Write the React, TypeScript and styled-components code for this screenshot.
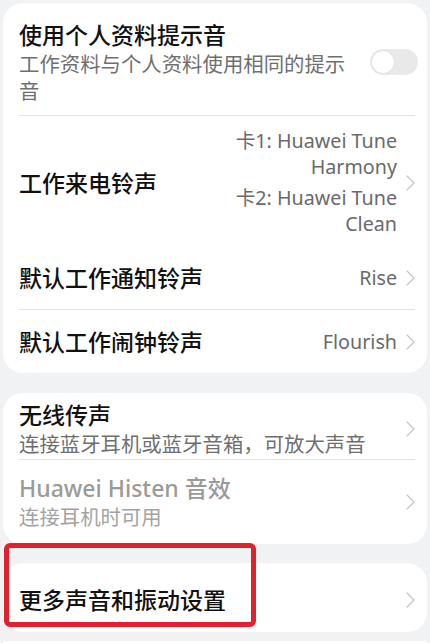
import React from 'react';
import styled, { createGlobalStyle } from 'styled-components';

const GlobalStyle = createGlobalStyle`
  html, body {
    margin: 0;
    padding: 0;
    background: #f1f2f4;
    overflow: hidden;
  }
  body {
    font-family: "Noto Sans", "Noto Sans CJK SC", sans-serif;
    -webkit-font-smoothing: antialiased;
  }
`;

const Page = styled.div`
  display: flex;
  flex-direction: column;
  padding: 3px 3px 0 3px;
  height: 643px;
  box-sizing: border-box;
  overflow: hidden;
`;

const Card = styled.div<{ $gap?: number }>`
  position: relative;
  flex-shrink: 0;
  background: #ffffff;
  border-radius: 20px;
  padding: 0 12px 0 16px;
  margin-bottom: ${p => p.$gap ?? 18}px;
`;

// the next card, only its top edge shows at the bottom of the screen
const PeekCard = styled.div`
  flex: 1;
  min-height: 0;
  background: #ffffff;
  border-radius: 20px 20px 0 0;
`;

const Row = styled.div<{ $pt?: number; $pb?: number; $min?: number; $divider?: boolean }>`
  display: flex;
  align-items: center;
  gap: 8px;
  min-height: ${p => p.$min ?? 0}px;
  padding: ${p => p.$pt ?? 0}px 0 ${p => p.$pb ?? 0}px 0;
  border-bottom: ${p => (p.$divider ? '1px solid #e3e3e3' : 'none')};
  box-sizing: border-box;
`;

const TextBlock = styled.div`
  flex: 1;
  min-width: 0;
`;

const Title = styled.div<{ $disabled?: boolean }>`
  font-size: 23px;
  line-height: 30px;
  font-weight: 500;
  color: ${p => (p.$disabled ? '#9a9a9a' : '#111111')};
`;

const Subtitle = styled.div<{ $disabled?: boolean }>`
  font-size: 20.4px;
  line-height: 27px;
  color: ${p => (p.$disabled ? '#a3a3a3' : '#6f6f6f')};
  margin-top: 1px;
`;

const Values = styled.div`
  display: flex;
  flex-direction: column;
  gap: 5px;
  align-items: flex-end;
`;

const Value = styled.div`
  font-size: 19.7px;
  line-height: 26px;
  color: #6a6a6a;
  text-align: right;
  max-width: 175px;
`;

const Toggle = styled.div`
  width: 48px;
  height: 26px;
  border-radius: 13px;
  background: #e9e9e9;
  position: relative;
  flex-shrink: 0;
  margin-left: 4px;
  margin-right: -3px;
  margin-bottom: 2px;

  &::after {
    content: '';
    position: absolute;
    left: 2px;
    top: 2px;
    width: 22px;
    height: 22px;
    border-radius: 50%;
    background: #ffffff;
    box-shadow: 0 0 1px rgba(0, 0, 0, 0.15);
  }
`;

const ChevronWrap = styled.div`
  width: 10px;
  display: flex;
  justify-content: center;
  flex-shrink: 0;
`;

const Highlight = styled.div`
  position: absolute;
  left: 1px;
  top: -20px;
  width: 252px;
  height: 84px;
  border: 5px solid #e1222c;
  border-radius: 6px;
  box-sizing: border-box;
  pointer-events: none;
`;

const Chevron = () => (
  <ChevronWrap>
    <svg width="9" height="16" viewBox="0 0 9 16" fill="none">
      <path d="M1 1 L8 8 L1 15" stroke="#c6c6c6" strokeWidth="1.3" strokeLinecap="round" strokeLinejoin="round" />
    </svg>
  </ChevronWrap>
);

export default function App() {
  return (
    <>
      <GlobalStyle />
      <Page>
        <Card $gap={20}>
          <Row $pt={17} $pb={10} $divider>
            <TextBlock>
              <Title>使用个人资料提示音</Title>
              <Subtitle>工作资料与个人资料使用相同的提示音</Subtitle>
            </TextBlock>
            <Toggle />
          </Row>
          <Row $pt={12} $pb={10}>
            <TextBlock>
              <Title>工作来电铃声</Title>
            </TextBlock>
            <Values>
              <Value>卡1: Huawei Tune Harmony</Value>
              <Value>卡2: Huawei Tune Clean</Value>
            </Values>
            <Chevron />
          </Row>
          <Row $min={63} $divider>
            <TextBlock>
              <Title>默认工作通知铃声</Title>
            </TextBlock>
            <Value>Rise</Value>
            <Chevron />
          </Row>
          <Row $min={63}>
            <TextBlock>
              <Title>默认工作闹钟铃声</Title>
            </TextBlock>
            <Value>Flourish</Value>
            <Chevron />
          </Row>
        </Card>

        <Card $gap={19}>
          <Row $pt={7} $pb={1} $divider>
            <TextBlock>
              <Title>无线传声</Title>
              <Subtitle>连接蓝牙耳机或蓝牙音箱，可放大声音</Subtitle>
            </TextBlock>
            <Chevron />
          </Row>
          <Row $pt={13} $pb={13}>
            <TextBlock>
              <Title $disabled>Huawei Histen 音效</Title>
              <Subtitle $disabled>连接耳机时可用</Subtitle>
            </TextBlock>
            <Chevron />
          </Row>
        </Card>

        <Card $gap={9}>
          <Row $min={69} $pt={5}>
            <TextBlock>
              <Title>更多声音和振动设置</Title>
            </TextBlock>
            <Chevron />
          </Row>
          <Highlight />
        </Card>

        <PeekCard />
      </Page>
    </>
  );
}
